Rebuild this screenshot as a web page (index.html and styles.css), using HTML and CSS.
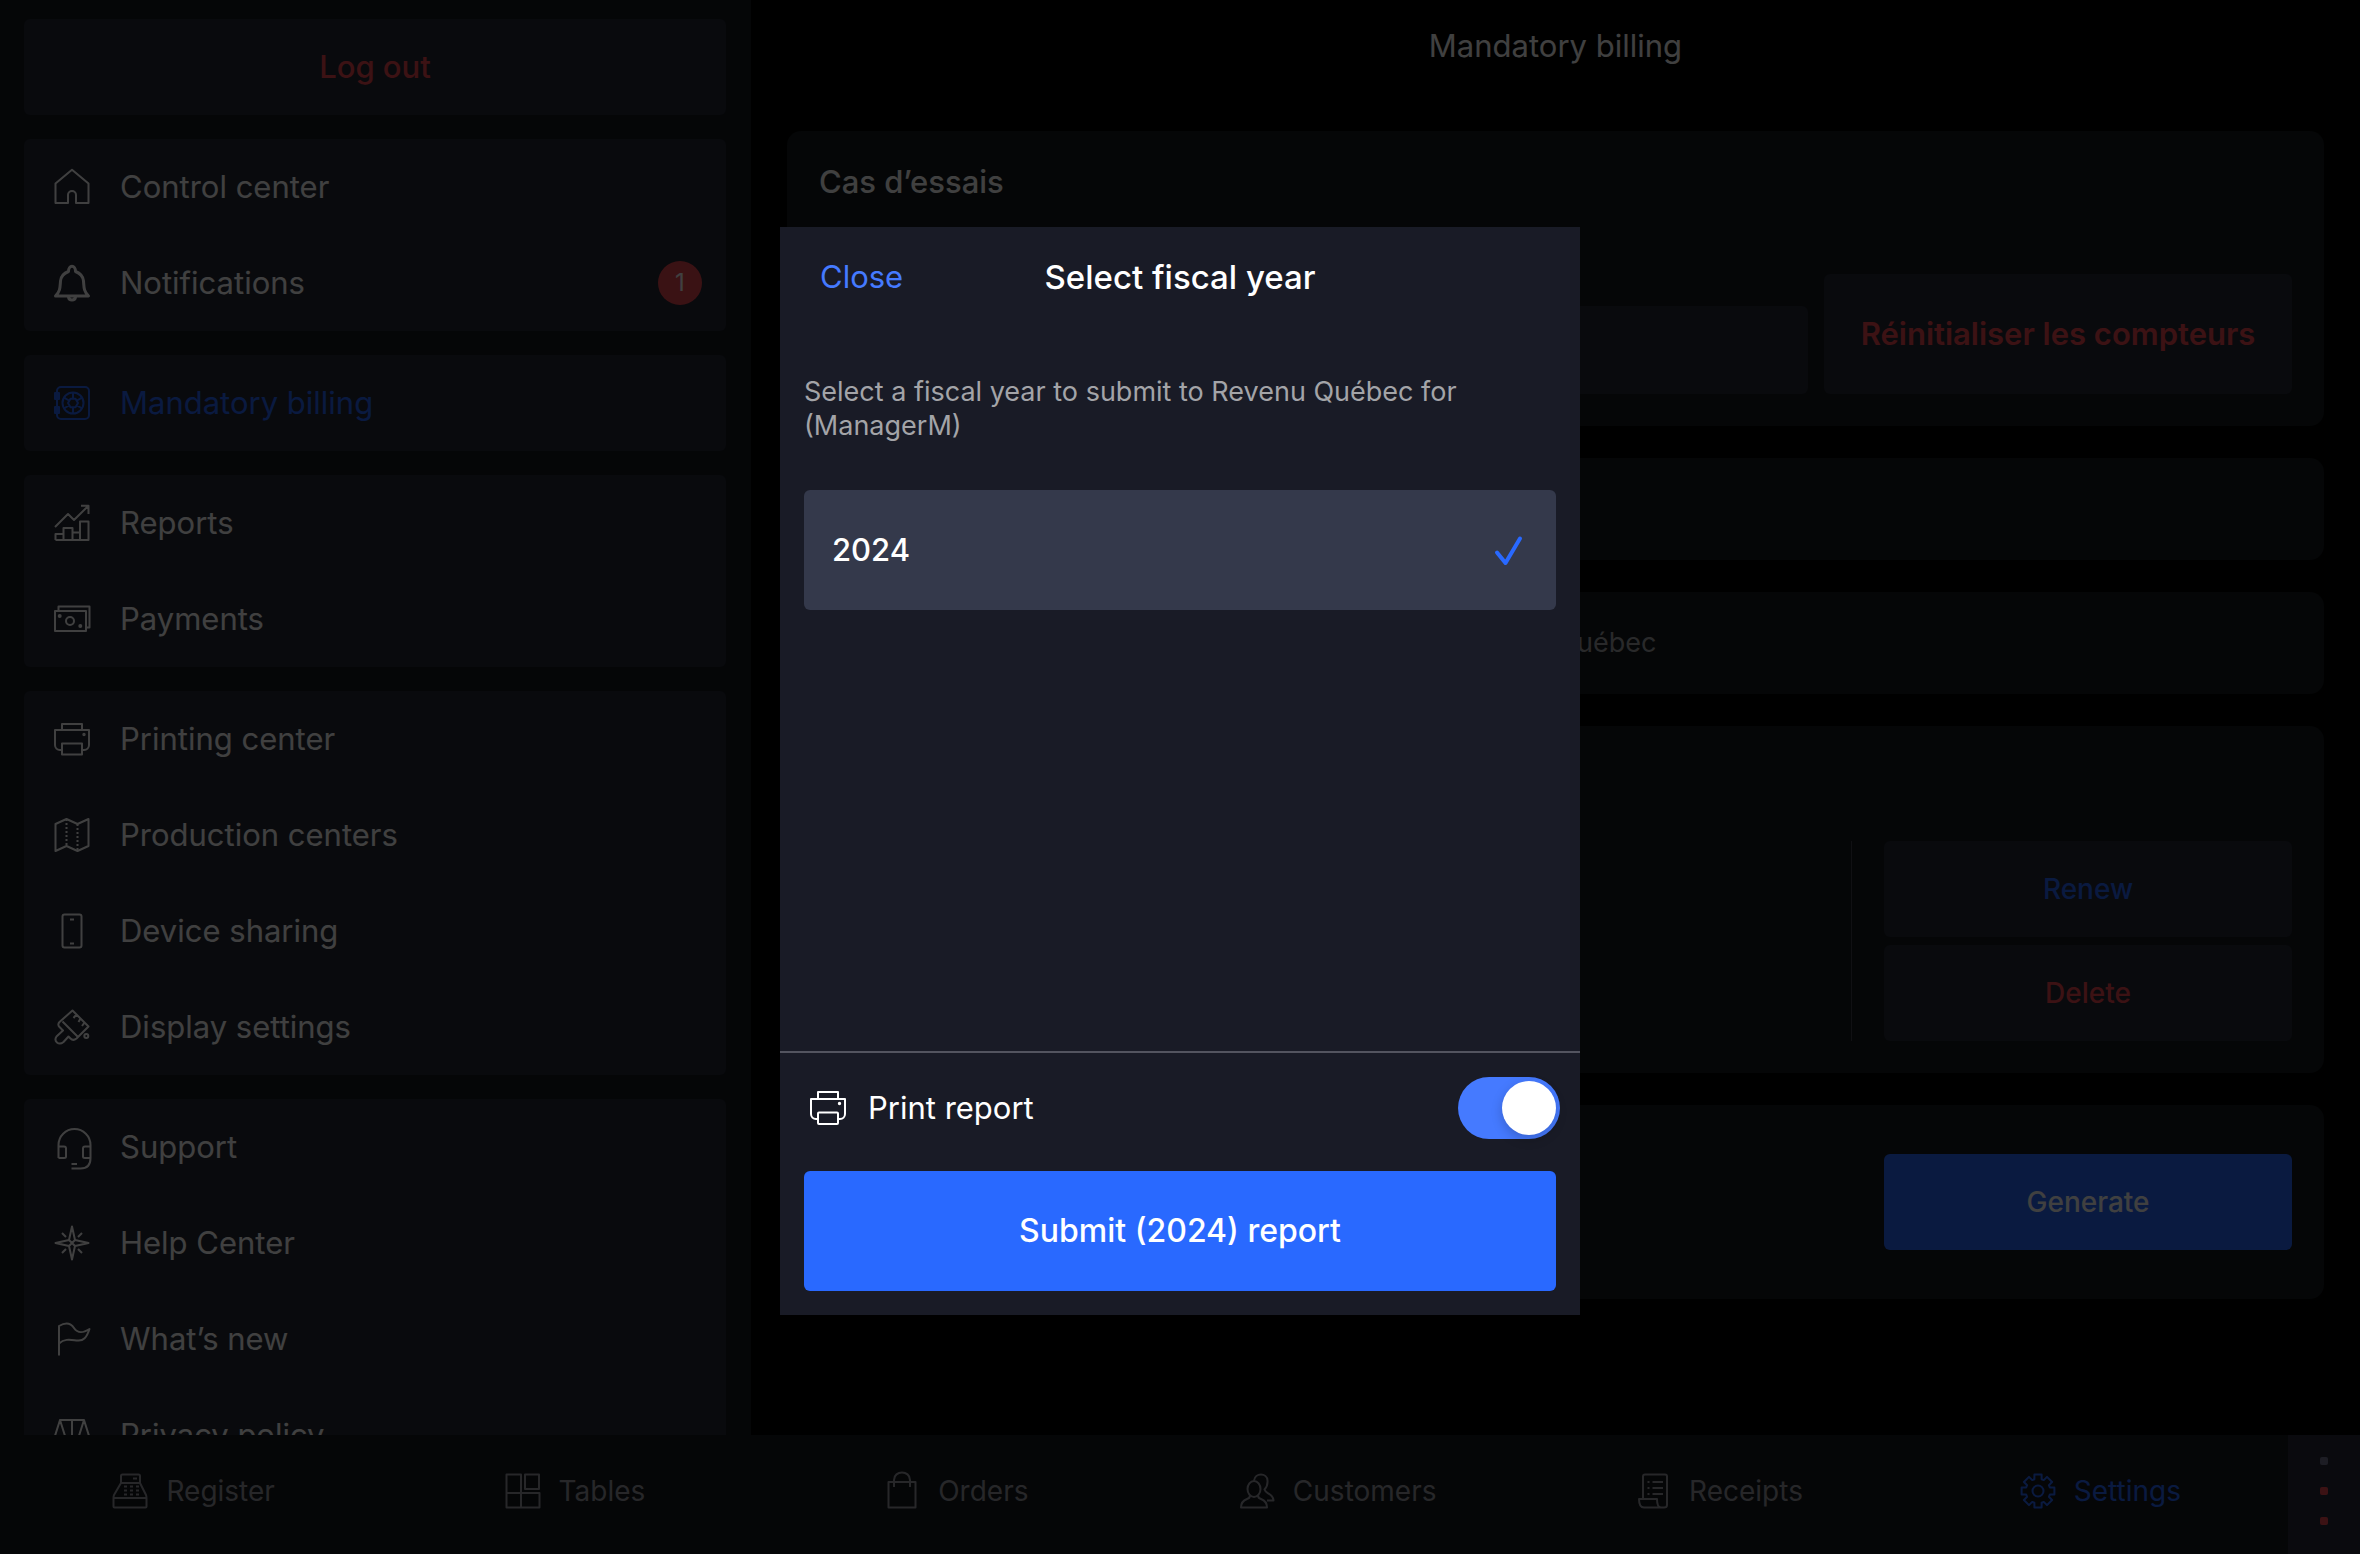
FILE: index.html
```
<!DOCTYPE html>
<html lang="en">
  <head>
  <title>Mandatory billing</title>
  <meta charset="utf-8">
  <meta name="viewport" content="width=device-width, initial-scale=1">
  <link rel="stylesheet" href="styles.css">
  </head>

  <body>

  <div class="app">

    <aside class="sidebar">
      <button type="button" class="group logout">Log out</button>

      <nav class="group">
        <a class="item" href="#">
          <svg class="icon" viewBox="0 0 40 40"><path d="M3.5 16.5 20 2.7l16.500 13.800V36H24v-8a4 4 0 0 0-8 0v8H3.500Z"/></svg>
          Control center
        </a>
        <a class="item" href="#">
          <svg class="icon bold" viewBox="0 0 40 40"><path d="M3.500 33c5-5 4.500-9 5-15 .5-5 4-8 8-9.500 0-7 7-7 7 0 4 1.500 7.500 4.500 8 9.500.5 6 0 10 5 15ZM16.500 34c.5 4 6.500 4 7 0"/></svg>
          Notifications
          <span class="badge">1</span>
        </a>
      </nav>

      <nav class="group">
        <a class="item active" href="#">
          <svg class="icon" viewBox="0 0 40 40">
            <rect x="5" y="4" width="32" height="32" rx="4"/>
            <rect class="fill" x="3" y="10" width="4" height="6"/><rect class="fill" x="3" y="24" width="4" height="6"/>
            <circle cx="21" cy="20" r="10.500"/>
            <path d="m18.500 15.700h5l2.500 4.300-2.500 4.300h-5L16 20ZM21 9.500v6.200M21 24.300v6.200M12 14.700l5 2.800M30 14.700l-5 2.800M12 25.300l5-2.800M30 25.300l-5-2.800"/>
          </svg>
          Mandatory billing
        </a>
      </nav>

      <nav class="group">
        <a class="item" href="#">
          <svg class="icon" viewBox="0 0 40 40"><path d="M3 24 16 11l6 6L36.500 2.700M29 2.700h7.500V11M3.500 37v-6h8M3.500 37h33V18.500h-8.500V37M28 29.500h-7.500M11.500 37V25h9v12"/></svg>
          Reports
        </a>
        <a class="item" href="#">
          <svg class="icon" viewBox="0 0 40 40"><rect x="3" y="12" width="31" height="20"/><path d="M6.500 12V7.500h31v21H34"/><circle cx="18" cy="22" r="4"/><circle class="fill" cx="7.700" cy="17" r="1"/><circle class="fill" cx="28.300" cy="27" r="1"/></svg>
          Payments
        </a>
      </nav>

      <nav class="group">
        <a class="item" href="#">
          <svg class="icon" viewBox="0 0 40 40"><path d="M10 11V5h20v6M10 31H8a5 5 0 0 1-5-5V11h34v15a5 5 0 0 1-5 5h-2"/><rect x="10" y="24.500" width="20" height="11"/><circle class="fill" cx="32" cy="15.500" r=".7"/></svg>
          Printing center
        </a>
        <a class="item" href="#">
          <svg class="icon" viewBox="0 0 40 40"><path d="m3.500 9 11-5 11 5 11-5v27l-11 5-11-5-11 5Z"/><path stroke-dasharray="2 2" d="M14.500 4v27M25.500 9v27"/></svg>
          Production centers
        </a>
        <a class="item" href="#">
          <svg class="icon" viewBox="0 0 40 40"><rect x="10.500" y="3.500" width="19" height="33" rx="2"/><path d="M18 8.500h4M18 32.500h4"/></svg>
          Device sharing
        </a>
        <a class="item" href="#">
          <svg class="icon" viewBox="0 0 40 40"><path d="M20.500 3.500 36.500 19.500 24.500 31.500c-2.500 2-4 2-6 0l-2-2-5 5.500c-5 4-10-1-7-5.500l6.500-6-3.500-3.500c-2-2-1-4 0-5ZM10.500 14.500 26 30M24.500 7.500 21.500 11M28.500 11.500 26.500 15M32.500 15.500 30 19"/><circle cx="34.300" cy="29" r="2"/></svg>
          Display settings
        </a>
      </nav>

      <nav class="group">
        <a class="item" href="#">
          <svg class="icon" viewBox="0 0 40 40"><path d="M6.500 31V18a16 16 0 0 1 32 0v13c0 7-4 10.500-10 10.500h-9M6.500 19.500H12c1 0 2 .7 2 2v8c0 1-1 1.500-2 1.500H6.500M38.500 19.500H33c-1 0-2 .7-2 2v8c0 1 1 1.500 2 1.500h5.500M19.500 37H25"/></svg>
          Support
        </a>
        <a class="item" href="#">
          <svg class="icon" viewBox="0 0 40 40"><path d="M20 3.500 23 17l13.500 3L23 23l-3 13.500L17 23 3.500 20 17 17ZM17 17l6 6M23 17l-6 6M10 10l4 4M30 10l-4 4M10 30l4-4M30 30l-4-4"/></svg>
          Help Center
        </a>
        <a class="item" href="#">
          <svg class="icon" viewBox="0 0 40 40"><path d="M7 36.500V7c6-3.500 11-4 15 2s9 5 15.500 1c-3 9-6 12-12 11.500S13 19 7 24.500"/></svg>
          What’s new
        </a>
        <a class="item" href="#">
          <svg class="icon" viewBox="0 0 40 40"><path d="M8 5h24M20 5v30M8 5 2 24h12ZM32 5l-6 19h12ZM12 36h16"/></svg>
          Privacy policy
        </a>
      </nav>
    </aside>

    <main class="content">
      <h1 class="page-title">Mandatory billing</h1>

      <div class="cards">
        <section class="card">
          <h2 class="card-title">Cas d’essais</h2>
          <div class="test-row">
            <input class="field" type="text" aria-label="Cas d’essais">
            <button type="button" class="button danger strong">Réinitialiser les compteurs</button>
          </div>
        </section>

        <section class="card"></section>

        <section class="card centered">Revenu Québec</section>

        <section class="card side">
          <div class="side-buttons">
            <button type="button" class="button accent">Renew</button>
            <button type="button" class="button danger">Delete</button>
          </div>
        </section>

        <section class="card generate">
          <button type="button" class="button primary">Generate</button>
        </section>
      </div>
    </main>

    <footer class="tabbar">
      <nav class="tabs">
        <a class="tab" href="#">
          <svg class="icon" viewBox="0 0 40 40"><path d="M11 12V5c0-1 .5-1.500 1.500-1.500h16c1 0 1.500.5 1.500 1.500v7M23 7.500h4M11 12h19l6 12c.4 1 .5 2 .5 3v8.500c0 .6-.4 1-1 1h-31c-.6 0-1-.4-1-1V27c0-1 .1-2 .5-3ZM3.500 27h33"/><path stroke-dasharray="3 3" d="M14 15.500h15M14 19.500h15M14 23.500h15"/></svg>
          Register
        </a>
        <a class="tab" href="#">
          <svg class="icon" viewBox="0 0 40 40"><path d="M3.500 3.500H18v33H3.500ZM3.500 22h33v14.500H18M22 3.500h14V18H22Z"/></svg>
          Tables
        </a>
        <a class="tab" href="#">
          <svg class="icon" viewBox="0 0 40 40"><path d="M6.500 11h27v25.500h-27ZM12 16V9c0-10 16-10 16 0v7"/></svg>
          Orders
        </a>
        <a class="tab" href="#">
          <svg class="icon" viewBox="0 0 40 40"><ellipse cx="17" cy="18" rx="6.500" ry="8"/><path d="M13 24.500c0 2-1 3-3 3.500-4 1.500-6 4-6 8.500h26c0-4.500-2-7-6-8.500-2-.5-3-1.500-3-3.500M17 9.500c1-8 13-8 13.500 0 .3 4-1 7-3 9 1 3 3 3 5.500 5 2 1.500 3.500 3.500 3.500 6H30"/></svg>
          Customers
        </a>
        <a class="tab" href="#">
          <svg class="icon" viewBox="0 0 40 40"><path d="M10 28V5.500c0-1.500.5-2 2-2h20c1.500 0 2 .5 2 2V34c0 2-1 2.500-3 2.500H11c-3 0-5-3-5-8.500h18c0 5 1 8.500 4 8.500M19.500 11H30M19.500 17H30M19.500 23H30M14.500 11h2M14.500 17h2M14.500 23h2"/></svg>
          Receipts
        </a>
        <a class="tab active" href="#">
          <svg class="icon" viewBox="0 0 40 40"><path d="M16.400 8.200V3.600h7.200v4.600l2.200.9L29 5.900l5.100 5.100-3.200 3.200.9 2.200h4.600v7.200h-4.600l-.9 2.200 3.200 3.200-5.100 5.100-3.200-3.200-2.200.9v4.600h-7.200v-4.600l-2.200-.9-3.200 3.200L5.900 29l3.200-3.200-.9-2.200H3.600v-7.200h4.600l.9-2.200L5.900 11 11 5.900l3.200 3.200Z"/><circle cx="20" cy="20" r="5.500"/></svg>
          Settings
        </a>
      </nav>
      <button type="button" class="status" aria-label="Status">
        <span class="dot"></span>
        <span class="dot red"></span>
        <span class="dot red"></span>
      </button>
    </footer>

  </div>

  <div class="scrim">
    <form class="modal" role="dialog" aria-labelledby="modal-title">
      <header class="modal-head">
        <button type="button" class="close">Close</button>
        <h2 id="modal-title" class="modal-title">Select fiscal year</h2>
      </header>

      <div class="modal-body">
        <p class="hint">Select a fiscal year to submit to Revenu Québec for (ManagerM)</p>
        <label class="year">
          <input type="radio" name="year" value="2024" checked>
          2024
          <svg class="check" viewBox="0 0 40 40"><path d="M9 22.500 17.500 33 32 8.500"/></svg>
        </label>
      </div>

      <footer class="modal-foot">
        <div class="print-row">
          <svg class="icon" viewBox="0 0 40 40"><path d="M10 11V4h20v7M10 31H8a5 5 0 0 1-5-5V11h34v15a5 5 0 0 1-5 5h-2"/><rect x="10" y="24.500" width="20" height="11.500" rx="1"/><circle class="fill" cx="31.500" cy="15.500" r=".7"/></svg>
          <label for="print">Print report</label>
          <input id="print" class="toggle" type="checkbox" role="switch" checked>
        </div>
        <button type="submit" class="submit">Submit (2024) report</button>
      </footer>
    </form>
  </div>

  </body>

</html>
```
FILE: styles.css
```
* {
  box-sizing: border-box;
}

html, body {
  height: 100%;
}
body {
  margin: 0;
  background: #000;
  color: #fff;
  font: 31px/38px Inter, "Liberation Sans", sans-serif;
  overflow: hidden;
}

h1, h2, p {
  margin: 0;
}
button, input {
  font: inherit;
  color: inherit;
  border: 0;
  padding: 0;
}
a {
  color: inherit;
  text-decoration: none;
}

.app {
  display: grid;
  grid-template-columns: 7fr 15fr;
  grid-template-rows: minmax(0, 1fr) auto;
  height: 100%;
}

.icon {
  flex: none;
  width: 40px;
  height: 40px;
  overflow: visible;
  fill: none;
  stroke: currentColor;
  stroke-width: 2;
  stroke-linejoin: round;
}
.icon.bold {
  stroke-width: 3;
}
.icon .fill {
  fill: currentColor;
}

/* left menu */

.sidebar {
  display: flex;
  flex-direction: column;
  gap: 24px;
  padding: 19px 25px 0 24px;
  background: #14181f;
  overflow: hidden;
}

.group {
  flex: none;
  border-radius: 6px;
  background: #242834;
}

.logout {
  height: 96px;
  color: #f04850;
  font-weight: 500;
}

.item {
  display: flex;
  align-items: center;
  gap: 28px;
  height: 96px;
  padding: 0 24px 0 28px;
}

.active {
  color: #2969ff;
}

.badge {
  width: 44px;
  margin-left: auto;
  border-radius: 22px;
  background: #e84850;
  font-size: 24px;
  line-height: 44px;
  text-align: center;
}

/* right side */

.content {
  padding: 27px 36px 0;
  overflow: hidden;
}

.page-title {
  margin-bottom: 66px;
  font-size: 31px;
  font-weight: 400;
  text-align: center;
}

.cards {
  display: flex;
  flex-direction: column;
  gap: 32px;
}

.card {
  min-height: 102px;
  padding: 32px;
  border-radius: 14px;
  background: #14181c;
}

.card-title {
  margin-bottom: 73px;
  font-size: 31px;
  font-weight: 500;
}

.test-row {
  display: flex;
  align-items: flex-end;
  gap: 16px;
}
.test-row .button {
  width: 468px;
  height: 120px;
}

.field {
  flex: 1;
  height: 88px;
  padding: 0 24px;
  border-radius: 6px;
  background: #242834;
}

.button {
  width: 408px;
  height: 96px;
  border-radius: 6px;
  background: #242834;
  font-size: 28px;
  font-weight: 500;
}
.danger {
  color: #f04850;
}
.accent {
  color: #2969ff;
}
.primary {
  background: #2969ff;
}
.strong {
  font-size: 31px;
  font-weight: 600;
}

.centered {
  color: #a3a4a8;
  font-size: 27px;
  text-align: center;
}

.side {
  display: flex;
  justify-content: flex-end;
  padding-top: 115px;
}
.side-buttons {
  display: flex;
  flex-direction: column;
  gap: 8px;
  padding-left: 32px;
  border-left: 1px solid #40424c;
}

.generate {
  padding: 49px 32px;
  text-align: right;
}
.generate .button {
  display: inline-block;
  vertical-align: top;
}

/* bottom tabs */

.tabbar {
  grid-column: 1 / -1;
  display: flex;
  background: #14181f;
  color: #9a9ba3;
  font-size: 28px;
}
.tabs {
  flex: 1;
  display: grid;
  grid-template-columns: repeat(6, 1fr);
  padding-bottom: 7px;
}
.tab {
  display: flex;
  align-items: center;
  justify-content: center;
  gap: 16px;
  height: 112px;
  padding-left: 4px;
}
.tab.active {
  color: #2969ff;
}

.status {
  display: flex;
  flex-direction: column;
  align-items: center;
  gap: 22px;
  width: 72px;
  padding-top: 22px;
  background: #282b3a;
}
.dot {
  width: 8px;
  height: 8px;
  border-radius: 2px;
  background: #747490;
}
.dot.red {
  background: #f04850;
}

/* dialog */

.scrim {
  position: fixed;
  inset: 0;
  display: flex;
  align-items: center;
  justify-content: center;
  padding-bottom: 12px;
  background: rgba(0,0,0,0.75);
}

.modal {
  display: flex;
  flex-direction: column;
  width: 800px;
  height: 1088px;
  background: #191b26;
}

.modal-head {
  display: grid;
  grid-template-columns: 1fr auto 1fr;
  align-items: center;
  height: 100px;
  padding: 0 40px;
}
.close {
  justify-self: start;
  background: none;
  color: #457aff;
}
.modal-title {
  font-size: 33px;
  font-weight: 500;
}

.modal-body {
  flex: 1;
  padding: 48px 24px 0;
}
.hint {
  margin-bottom: 47px;
  color: #a3a4a8;
  font-size: 27px;
  line-height: 34px;
}

.year {
  display: flex;
  align-items: center;
  height: 120px;
  padding: 0 28px;
  border-radius: 6px;
  background: #34394b;
  font-weight: 500;
}
.year input {
  appearance: none;
  width: 0;
  margin: 0;
}
.check {
  width: 40px;
  height: 40px;
  margin-left: auto;
  fill: none;
  stroke: #2969ff;
  stroke-width: 4;
  stroke-linecap: round;
  stroke-linejoin: round;
}

.modal-foot {
  padding: 24px;
  border-top: 2px solid #53545f;
}
.print-row {
  display: flex;
  align-items: center;
  gap: 20px;
  margin: 0 -4px 32px 4px;
}

.toggle {
  appearance: none;
  width: 102px;
  height: 62px;
  margin: 0 0 0 auto;
  padding: 4px;
  border-radius: 31px;
  background: #457aff;
}
.toggle::before {
  content: "";
  display: block;
  width: 54px;
  height: 54px;
  border-radius: 50%;
  background: #fff;
  box-shadow: 0 4px 12px rgba(0,0,0,0.2);
}
.toggle:checked::before {
  margin-left: auto;
}

.submit {
  width: 100%;
  height: 120px;
  border-radius: 6px;
  background: #2969ff;
  font-size: 32px;
  font-weight: 500;
}
```
